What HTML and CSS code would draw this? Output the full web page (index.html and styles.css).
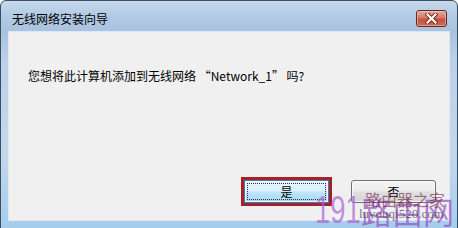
FILE: index.html
```html
<!DOCTYPE html>
<html lang="zh-CN">
<head>
<meta charset="utf-8">
<title>无线网络安装向导</title>
<link rel="stylesheet" href="styles.css">
</head>
<body>
<div class="window">
  <div class="titlebar">
    <span class="title">无线网络安装向导</span>
    <button class="close" aria-label="关闭">
      <svg width="13" height="11" viewBox="0 0 13 11">
        <path d="M2.5 1.5 L10.5 9.5 M10.5 1.5 L2.5 9.5" stroke="#6b2418" stroke-width="4" stroke-linecap="square"/>
        <path d="M2.5 1.5 L10.5 9.5 M10.5 1.5 L2.5 9.5" stroke="#ffffff" stroke-width="2.2" stroke-linecap="square"/>
      </svg>
    </button>
  </div>
  <div class="client">
    <p class="message">您想将此计算机添加到无线网络 “Network_1” 吗?</p>
    <div class="buttons">
      <span class="mark"><button class="btn btn-default"><span class="focus">是</span></button></span>
      <button class="btn">否</button>
    </div>
  </div>
  <div class="watermark">
    <span class="wm-num">191</span>
    <span class="wm-big">路由网</span>
    <span class="wm-small">路由器之家</span>
    <span class="wm-url">luyouqi520.com</span>
  </div>
</div>
</body>
</html>
```
FILE: styles.css
```css
html, body {
  margin: 0;
  padding: 0;
  background: #ffffff;
}
body {
  width: 458px;
  height: 228px;
  overflow: hidden;
  font-family: "Noto Sans CJK SC", "Noto Sans", sans-serif;
}
.window {
  position: relative;
  box-sizing: border-box;
  width: 458px;
  height: 236px;
  border: 1px solid #3e4e60;
  border-radius: 6px 6px 0 0;
  padding: 0 7px 7px;
  background: linear-gradient(to bottom, #c6d9ed 0px, #b3cbe5 14px, #a8c2df 30px, #bbd1e9 60px, #c4d8ec 150px, #a8cdec 222px, #a6ccec 236px);
  display: flex;
  flex-direction: column;
}
.titlebar {
  height: 30px;
  display: flex;
  align-items: flex-start;
  justify-content: space-between;
  padding-left: 4px;
  box-sizing: border-box;
}
.title {
  font-size: 12px;
  line-height: 16px;
  margin-top: 10px;
  color: #000;
}
.close {
  margin-top: 9px;
  margin-right: 3px;
  width: 31px;
  height: 17px;
  padding: 0;
  box-sizing: border-box;
  border: 1px solid #5f2a22;
  border-radius: 3px;
  background: linear-gradient(to bottom, #e8a99c 0%, #d47868 45%, #c4513e 55%, #cf6a4f 100%);
  box-shadow: inset 0 0 0 1px rgba(255, 210, 200, 0.5);
  display: flex;
  align-items: center;
  justify-content: center;
}
.close svg {
  display: block;
}
.client {
  flex: none;
  height: 190px;
  box-sizing: border-box;
  background: #f0f0f0;
  border: 1px solid #dfe8f2;
  display: flex;
  flex-direction: column;
  justify-content: space-between;
  padding: 36px 13px 17px 19px;
}
.message {
  margin: 0;
  font-size: 12px;
  line-height: 16px;
  color: #000;
}
.buttons {
  display: flex;
  justify-content: flex-end;
  gap: 22px;
}
.mark {
  display: flex;
  margin: -3px;
  border: 3px solid #a81f2c;
}
.btn {
  width: 85px;
  height: 23px;
  box-sizing: border-box;
  padding: 0;
  font-family: "Noto Sans CJK SC", "Noto Sans", sans-serif;
  font-size: 12px;
  line-height: 14px;
  color: #000;
  border: 1px solid #707070;
  border-radius: 3px;
  background: linear-gradient(to bottom, #f3f3f3 0%, #ececec 49%, #e0e0e0 51%, #d6d6d6 100%);
  box-shadow: inset 0 0 0 1px rgba(255, 255, 255, 0.7);
  display: flex;
  align-items: center;
  justify-content: center;
}
.btn-default {
  border-color: #3c7fb1;
  border-radius: 0;
  background: linear-gradient(to bottom, #eaf6fd 0%, #d9f0fc 49%, #bee6fd 51%, #a7d9f5 100%);
  padding: 2px;
}
.focus {
  flex: 1;
  align-self: stretch;
  border: 1px dotted #333;
  display: flex;
  align-items: center;
  justify-content: center;
}
.watermark {
  position: absolute;
  left: 0;
  top: 0;
  width: 458px;
  height: 236px;
  pointer-events: none;
}
.wm-num {
  position: absolute;
  left: 314px;
  top: 190px;
  font-family: "Liberation Sans", sans-serif;
  font-size: 38px;
  line-height: 1;
  color: rgba(165, 100, 210, 0.7);
  transform: scaleX(0.72);
  transform-origin: left top;
}
.wm-big {
  position: absolute;
  left: 360px;
  top: 194px;
  font-size: 31px;
  line-height: 1;
  color: rgba(150, 80, 200, 0.72);
}
.wm-small {
  position: absolute;
  left: 364px;
  top: 190px;
  font-size: 16px;
  line-height: 1;
  color: rgba(120, 40, 70, 0.65);
}
.wm-url {
  position: absolute;
  left: 358px;
  top: 206px;
  font-family: "Liberation Serif", serif;
  font-size: 13px;
  line-height: 1;
  color: rgba(60, 60, 70, 0.7);
}
```
